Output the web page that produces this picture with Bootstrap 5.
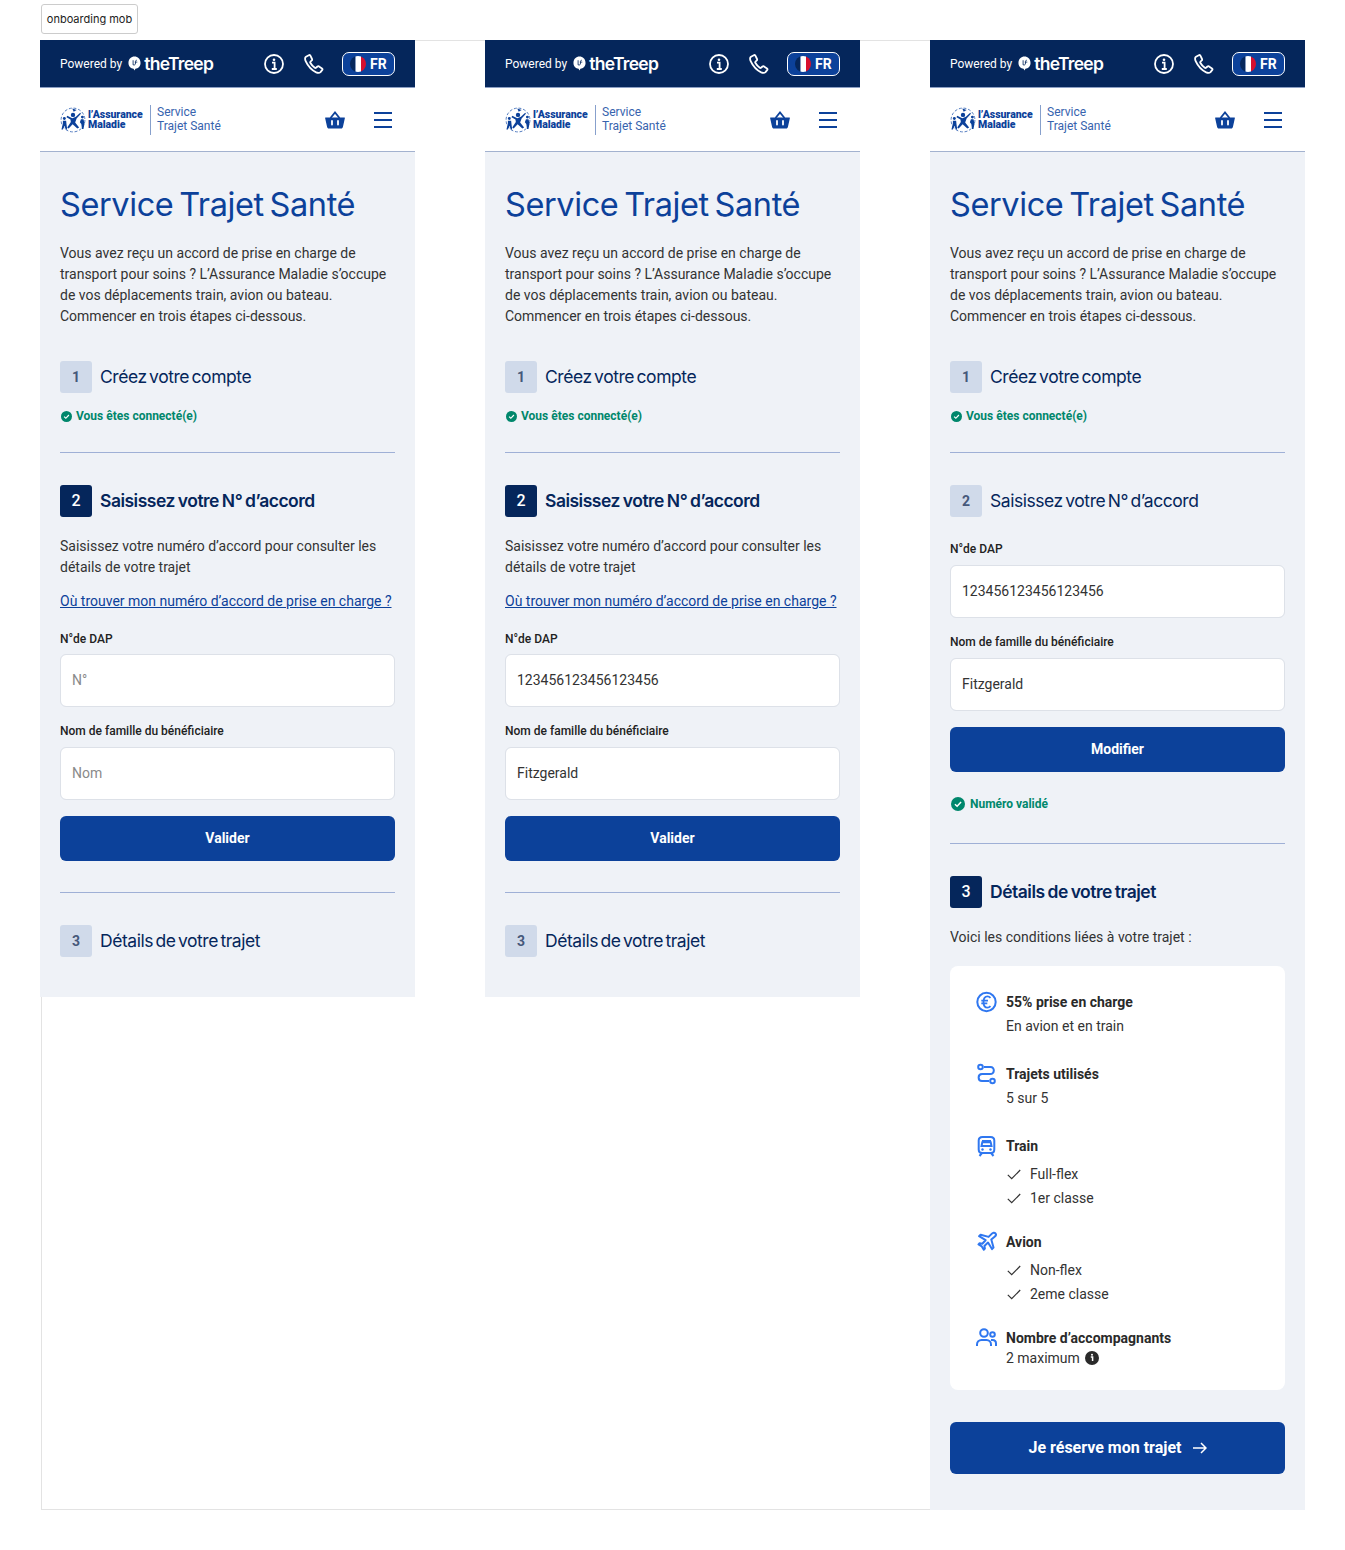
<!DOCTYPE html>
<html lang="fr">
<head>
  <meta charset="UTF-8" />
  <meta name="viewport" content="width=device-width, initial-scale=1" />
  <title>Service Trajet Santé</title>
  <link href="https://cdn.jsdelivr.net/npm/bootstrap@5.3.0/dist/css/bootstrap.min.css" rel="stylesheet">
  <style>
    body { background: #fff; font-family: Roboto, sans-serif; color: #333; font-size: 14px; line-height: 21px; }
    .frame-tag { margin: 4px 0 6px 41px; width: 97px; height: 30px; border: 1px solid #ccc; border-radius: 3px; font: 11px/28px Inter, sans-serif; text-align: center; color: #222; background: #fff; }
    .frame-board { margin-left: 41px; width: 1264px; height: 1470px; border: 1px solid #e3e3e3; border-right: 0; gap: 70px; }
    .phone-col { width: 375px; margin-top: -1px; flex: none; background: #eff2f7; align-self: flex-start; }
    .phone-col:first-child { margin-left: -2px; }
    .phone-col.tall { height: 1470px; }
    .top-band { height: 48px; background: #05265b; border-bottom: 1px solid #8c9fc4; padding: 0 20px; color: #fff; }
    .powered { font-size: 12px; margin-top: 2px; }
    .treep-name { font: 600 17.5px/1 Inter, sans-serif; letter-spacing: -.7px; margin-left: 3px; }
    .lang-pill { width: 53px; height: 24px; border: 1px solid #fff; border-radius: 7px; background: #0c419a; font-weight: 700; font-size: 14px; padding-left: 7px; gap: 4px; }
    .lang-code { margin-top: 1px; }
    .brand-band { height: 64px; background: #fff; border-bottom: 1px solid #a3b2cf; padding: 0 23px 0 20px; color: #0c419a; }
    .am-name { font: 900 10.5px/10px Roboto, sans-serif; letter-spacing: -.05px; margin-left: 2px; width: 56px; flex: none; }
    .brand-sep { width: 1px; height: 30px; background: #87a0cc; margin: 0 6px; }
    .brand-sub { font-size: 12px; line-height: 14px; color: #3763ae; margin-top: -2px; }
    .col-body { padding: 35px 20px 0; height: 845px; }
    .tall .col-body { height: auto; }
    .big-title { font: 400 32.5px/36px Inter, sans-serif; letter-spacing: -.4px; word-spacing: -3px; color: #0c419a; margin: 0 0 20px; }
    .step-head { gap: 8px; height: 32px; font: 400 17.5px/32px Inter, sans-serif; letter-spacing: -.45px; word-spacing: -2px; color: #05265b; }
    .step-num { width: 32px; height: 32px; border-radius: 3px; background: #d0daea; color: #46587a; font: 700 14px/32px Roboto, sans-serif; letter-spacing: 0; word-spacing: 0; text-align: center; }
    .step-head.on { font-weight: 600; letter-spacing: -.5px; word-spacing: -1px; }
    .step-head.on .step-num { background: #05265b; color: #fff; font-size: 16px; font-weight: 500; }
    .ok-line { color: #00876c; font-weight: 700; font-size: 12px; line-height: 16px; gap: 5px; }
    .step-rule { border: 0; border-top: 1px solid #9fb0d6; opacity: 1; margin: 0; }
    .help-link { color: #0c419a; }
    .dap-label { font-size: 12px; font-weight: 500; line-height: 16px; color: #222; margin: 0 0 8px; display: block; }
    .dap-label.tight { margin-bottom: 7px; }
    .dap-input { height: 53px; border: 1px solid #dde1e8; border-radius: 6px; padding: 0 11px 2px; font-size: 14px; color: #333; }
    .dap-input::placeholder { color: #8a8a8a; }
    .go-btn { background: #0c419a; border: 0; border-radius: 6px; color: #fff; font-weight: 700; font-size: 14px; height: 45px; width: 100%; }
    .go-btn.large { height: 52px; font-size: 16px; }
    .terms-box { background: #fff; border-radius: 8px; height: 424px; padding: 24px 25px; }
    .term-row { gap: 9.5px; }
    .term-ico { width: 21px; flex: none; margin-left: .5px; }
    .term-title { font-weight: 700; color: #2a2a2a; line-height: 24px; }
    .term-sub { line-height: 24px; }
    .tick-line { line-height: 24px; gap: 9px; }
    .tick-line svg { margin-left: 1px; }
  </style>
</head>
<body>

  <svg width="0" height="0" class="position-absolute">
    <symbol id="s-leaf" viewBox="0 0 14 16"><path d="M7 .5C10.500.5 13.500 3 13.500 7.500c0 3.500-2.500 6-5.500 6.200L7 15.500l-1-1.800C3 13.500.5 11 .5 7.500.5 3 3.500.5 7 .5z" fill="#fff"/><path d="M5.500 4.500v5h2M9.500 4.500c-1.200 0-1.500.8-1.500 1.500v3M7.500 6.500h2.500" stroke="#05265b" stroke-width=".9" fill="none"/></symbol>
    <symbol id="s-info" viewBox="0 0 20 20"><circle cx="10" cy="10" r="9" fill="none" stroke="#fff" stroke-width="1.800"/><circle cx="10" cy="5.800" r="1.300" fill="#fff"/><path d="M8 8.600h2.600v6.200M7.800 15h5" fill="none" stroke="#fff" stroke-width="1.800"/></symbol>
    <symbol id="s-phone" viewBox="0 0 20 20"><path d="M4.800 1.200 2 2.800C.8 3.600.9 5.400 1.800 7.400c2.300 5 6 8.800 10.400 11 1.800.8 3.300.7 4.300-.3l1.800-2.200c.4-.6.200-1.100-.3-1.500l-3-2c-.6-.3-1-.3-1.500.1l-1.500 1.300c-.4.300-.8.300-1.200 0-1.800-1.200-3.400-3-4.500-5-.2-.4-.2-.8.200-1.200l1.300-1.200c.4-.4.500-.8.200-1.400L6.400 1.700c-.4-.6-1-.8-1.600-.5z" fill="none" stroke="#fff" stroke-width="1.800" stroke-linejoin="round"/></symbol>
    <symbol id="s-flag" viewBox="0 0 16 16"><clipPath id="flag-clip"><circle cx="8" cy="8" r="8"/></clipPath><g clip-path="url(#flag-clip)"><rect width="5.500" height="16" fill="#05265b"/><rect x="5.500" width="5.500" height="16" fill="#fff"/><rect x="11" width="5" height="16" fill="#d8102e"/></g></symbol>
    <symbol id="s-basket" viewBox="0 0 20 18"><path d="M5.500 7 10 1.500 14.500 7" fill="none" stroke="#0c419a" stroke-width="1.800"/><path d="M.5 6.500h19c.3 0 .5.300.4.600l-2 8.900c-.2.800-.8 1.500-1.700 1.500H3.800c-.9 0-1.500-.7-1.700-1.500L.1 7.100c-.1-.3.100-.6.400-.6z" fill="#0c419a"/><path d="M7 10v3.500M13 10v3.500" stroke="#fff" stroke-width="1.800" stroke-linecap="round"/></symbol>
    <symbol id="s-burger" viewBox="0 0 18 16"><path d="M0 1h18M0 8h18M0 15h18" stroke="#0c419a" stroke-width="1.800"/></symbol>
    <symbol id="s-people" viewBox="0 0 36 36"><circle cx="18" cy="18" r="16.500" fill="none" stroke="#4a74bc" stroke-width="1.300" stroke-dasharray="4 2.500"/><g fill="#0c419a"><circle cx="18" cy="11" r="3"/><path d="M10 12l7 3.500 5-2 6-5.500 1 1.300-6 6.700-2 5.500 5.500 7-2.500 1.300-6.500-6-5.500 6-2-1.500 5-7.500-.5-3.500-5.500-3z"/><circle cx="6" cy="16" r="2"/><path d="M4 19h4.500l.5 5 1 7H8l-1.700-5L4 31H2l2-8z"/><circle cx="31" cy="14" r="2"/><path d="M29 17h3.500l1.500 5-1.500 8.500h-2l-1-7-2-2.500z"/><path d="M17 2l6 2-4 2.500z"/></g></symbol>
    <symbol id="s-check-round" viewBox="0 0 16 16"><circle cx="8" cy="8" r="8" fill="#00876c"/><path d="M4.500 8.200 7 10.600l4.500-4.800" fill="none" stroke="#fff" stroke-width="1.700"/></symbol>
    <symbol id="s-tick" viewBox="0 0 14 11"><path d="M.8 5.800 4.700 9.700 13.200 1" fill="none" stroke="#333" stroke-width="1.200"/></symbol>
  </svg>

  <div class="frame-tag">onboarding mob</div>

  <div class="frame-board d-flex">

    <div class="phone-col">
      <div class="js-head"></div>
      <div class="col-body">
        <h1 class="big-title">Service Trajet Santé</h1>
        <p class="mb-0 js-intro"></p>
        <div class="step-head d-flex" style="margin-top:34px"><span class="step-num">1</span>Créez votre compte</div>
        <div class="ok-line d-flex align-items-center js-connected" style="margin-top:15px"></div>
        <hr class="step-rule" style="margin-top:28px">
        <div class="step-head on d-flex" style="margin-top:32px"><span class="step-num">2</span>Saisissez votre N° d’accord</div>
        <p class="mb-0" style="margin-top:19px">Saisissez votre numéro d’accord pour consulter les<br>détails de votre trajet</p>
        <a class="help-link d-block" href="#" style="margin-top:13px">Où trouver mon numéro d’accord de prise en charge ?</a>
        <label class="dap-label tight" style="margin-top:19px">N°de DAP</label>
        <input class="form-control dap-input" placeholder="N°">
        <label class="dap-label" style="margin-top:16px">Nom de famille du bénéficiaire</label>
        <input class="form-control dap-input" placeholder="Nom">
        <button class="btn go-btn" style="margin-top:16px">Valider</button>
        <hr class="step-rule" style="margin-top:31px">
        <div class="step-head d-flex" style="margin-top:32px"><span class="step-num">3</span>Détails de votre trajet</div>
      </div>
    </div>

    <div class="phone-col">
      <div class="js-head"></div>
      <div class="col-body">
        <h1 class="big-title">Service Trajet Santé</h1>
        <p class="mb-0 js-intro"></p>
        <div class="step-head d-flex" style="margin-top:34px"><span class="step-num">1</span>Créez votre compte</div>
        <div class="ok-line d-flex align-items-center js-connected" style="margin-top:15px"></div>
        <hr class="step-rule" style="margin-top:28px">
        <div class="step-head on d-flex" style="margin-top:32px"><span class="step-num">2</span>Saisissez votre N° d’accord</div>
        <p class="mb-0" style="margin-top:19px">Saisissez votre numéro d’accord pour consulter les<br>détails de votre trajet</p>
        <a class="help-link d-block" href="#" style="margin-top:13px">Où trouver mon numéro d’accord de prise en charge ?</a>
        <label class="dap-label tight" style="margin-top:19px">N°de DAP</label>
        <input class="form-control dap-input" value="123456123456123456">
        <label class="dap-label" style="margin-top:16px">Nom de famille du bénéficiaire</label>
        <input class="form-control dap-input" value="Fitzgerald">
        <button class="btn go-btn" style="margin-top:16px">Valider</button>
        <hr class="step-rule" style="margin-top:31px">
        <div class="step-head d-flex" style="margin-top:32px"><span class="step-num">3</span>Détails de votre trajet</div>
      </div>
    </div>

    <div class="phone-col tall">
      <div class="js-head"></div>
      <div class="col-body">
        <h1 class="big-title">Service Trajet Santé</h1>
        <p class="mb-0 js-intro"></p>
        <div class="step-head d-flex" style="margin-top:34px"><span class="step-num">1</span>Créez votre compte</div>
        <div class="ok-line d-flex align-items-center js-connected" style="margin-top:15px"></div>
        <hr class="step-rule" style="margin-top:28px">
        <div class="step-head d-flex" style="margin-top:32px"><span class="step-num">2</span>Saisissez votre N° d’accord</div>
        <label class="dap-label" style="margin-top:24px">N°de DAP</label>
        <input class="form-control dap-input" value="123456123456123456">
        <label class="dap-label" style="margin-top:16px">Nom de famille du bénéficiaire</label>
        <input class="form-control dap-input" value="Fitzgerald">
        <button class="btn go-btn" style="margin-top:16px">Modifier</button>
        <div class="ok-line d-flex align-items-center" style="margin-top:24px"><svg style="margin-left:1px" width="14" height="14"><use href="#s-check-round"/></svg>Numéro validé</div>
        <hr class="step-rule" style="margin-top:31px">
        <div class="step-head on d-flex" style="margin-top:32px"><span class="step-num">3</span>Détails de votre trajet</div>
        <p class="mb-0" style="margin-top:19px">Voici les conditions liées à votre trajet :</p>
        <div class="terms-box" style="margin-top:18px">
          <div class="term-row d-flex">
            <svg class="term-ico" height="24" viewBox="0 0 21 24"><circle cx="10.500" cy="12" r="9.200" fill="none" stroke="#2f77f0" stroke-width="2"/><path d="M14.500 7.800c-.9-1-1.900-1.500-3-1.500-2.500 0-4 2.500-4 5.700s1.500 5.700 4 5.700c1.100 0 2.100-.5 3-1.500M5.300 10.600h6.700M5.300 13.400h6" fill="none" stroke="#2f77f0" stroke-width="1.800"/></svg>
            <div><div class="term-title">55% prise en charge</div><div class="term-sub">En avion et en train</div></div>
          </div>
          <div class="term-row d-flex" style="margin-top:24px">
            <svg class="term-ico" height="24" viewBox="0 0 21 24"><circle cx="4.500" cy="5" r="2.300" fill="none" stroke="#2f77f0" stroke-width="2"/><circle cx="16.500" cy="19" r="2.300" fill="none" stroke="#2f77f0" stroke-width="2"/><path d="M8 5h6.500c4.500 0 4.500 7-.5 7H6c-4.500 0-4.500 7 0 7h7" fill="none" stroke="#2f77f0" stroke-width="2"/></svg>
            <div><div class="term-title">Trajets utilisés</div><div class="term-sub">5 sur 5</div></div>
          </div>
          <div class="term-row d-flex" style="margin-top:24px">
            <svg class="term-ico" height="24" viewBox="0 0 21 24"><path d="M6.500 3h8c2.300 0 3.800 1.500 3.800 3.500v9c0 2-1.500 3.500-3.500 3.500h-8.600c-2 0-3.500-1.500-3.500-3.500v-9C2.700 4.500 4.200 3 6.500 3zM6 7h9M6.300 8.300h8.400l.8 3.800H5.500zM6 19l-2.500 3M15 19l2.500 3" fill="none" stroke="#2f77f0" stroke-width="2"/><circle cx="6.500" cy="15.500" r="1.200" fill="#2f77f0"/><circle cx="14.500" cy="15.500" r="1.200" fill="#2f77f0"/></svg>
            <div>
              <div class="term-title">Train</div>
              <div class="tick-line d-flex align-items-center" style="margin-top:4px"><svg width="14" height="11"><use href="#s-tick"/></svg>Full-flex</div>
              <div class="tick-line d-flex align-items-center"><svg width="14" height="11"><use href="#s-tick"/></svg>1er classe</div>
            </div>
          </div>
          <div class="term-row d-flex" style="margin-top:20px">
            <svg class="term-ico" height="24" viewBox="0 0 21 24"><path d="M19.300 3.200c-.9-.9-2.400-.6-3.400.4l-3.300 3.300-8-2.200-1.500 1.500 6.500 4-3.300 3.600-2.700-.5-1.100 1.100 3.300 2 2 3.300 1.100-1.100-.5-2.700 3.600-3.300 4 6.500 1.500-1.500-2.200-8L18.900 6.600c1-1 1.300-2.500.4-3.400z" fill="none" stroke="#2f77f0" stroke-width="2" stroke-linejoin="round"/></svg>
            <div>
              <div class="term-title">Avion</div>
              <div class="tick-line d-flex align-items-center" style="margin-top:4px"><svg width="14" height="11"><use href="#s-tick"/></svg>Non-flex</div>
              <div class="tick-line d-flex align-items-center"><svg width="14" height="11"><use href="#s-tick"/></svg>2eme classe</div>
            </div>
          </div>
          <div class="term-row d-flex" style="margin-top:20px">
            <svg class="term-ico" height="24" viewBox="0 0 21 24"><circle cx="8" cy="7" r="3.800" fill="none" stroke="#2f77f0" stroke-width="2"/><circle cx="16.500" cy="8.500" r="2.300" fill="none" stroke="#2f77f0" stroke-width="2"/><path d="M1 20v-1.500c0-2.500 2-4.500 4.500-4.500h5c2.500 0 4.500 2 4.500 4.500V20M15 14h1.500c2 0 3.500 1.500 3.500 3.500V20" fill="none" stroke="#2f77f0" stroke-width="2"/></svg>
            <div>
              <div class="term-title">Nombre d’accompagnants</div>
              <div class="d-flex align-items-center" style="gap:5px;line-height:16px">2 maximum <svg width="14" height="14" viewBox="0 0 14 14"><circle cx="7" cy="7" r="7" fill="#2a2a2a"/><circle cx="7" cy="3.800" r="1" fill="#fff"/><path d="M5.800 6h1.800v4" fill="none" stroke="#fff" stroke-width="1.500"/></svg></div>
            </div>
          </div>
        </div>
        <button class="btn go-btn large d-flex align-items-center justify-content-center" style="margin-top:32px;gap:11px">Je réserve mon trajet <svg width="14" height="12" viewBox="0 0 14 12"><path d="M0 6h12.500M8 1l5 5-5 5" fill="none" stroke="#fff" stroke-width="1.500"/></svg></button>
      </div>
    </div>

  </div>

  <script>
    const headHtml = `
      <div class="top-band d-flex align-items-center">
        <span class="powered">Powered by</span>
        <svg style="margin-left:6px" width="13" height="15"><use href="#s-leaf"/></svg>
        <span class="treep-name">theTreep</span>
        <svg class="ms-auto" width="20" height="20"><use href="#s-info"/></svg>
        <svg style="margin-left:20px" width="20" height="20"><use href="#s-phone"/></svg>
        <span class="lang-pill d-flex align-items-center" style="margin-left:18px"><svg width="16" height="16"><use href="#s-flag"/></svg><span class="lang-code">FR</span></span>
      </div>
      <div class="brand-band d-flex align-items-center">
        <svg width="26" height="26"><use href="#s-people"/></svg>
        <span class="am-name">l’Assurance<br>Maladie</span>
        <span class="brand-sep"></span>
        <span class="brand-sub">Service<br>Trajet Santé</span>
        <svg class="ms-auto" width="20" height="18"><use href="#s-basket"/></svg>
        <svg style="margin-left:29px" width="18" height="16"><use href="#s-burger"/></svg>
      </div>`;

    document.querySelectorAll(".js-head").forEach(el => { el.innerHTML = headHtml; });
    document.querySelectorAll(".js-intro").forEach(el => {
      el.innerHTML = "Vous avez reçu un accord de prise en charge de<br>transport pour soins ? L’Assurance Maladie s’occupe<br>de vos déplacements train, avion ou bateau.<br>Commencer en trois étapes ci-dessous.";
    });
    document.querySelectorAll(".js-connected").forEach(el => {
      el.classList.add("gap-1");
      el.innerHTML = '<svg style="margin-left:1px" width="11" height="11"><use href="#s-check-round"/></svg>Vous êtes connecté(e)';
    });
  </script>

  <script src="https://cdn.jsdelivr.net/npm/bootstrap@5.3.0/dist/js/bootstrap.bundle.min.js"></script>
</body>
</html>
